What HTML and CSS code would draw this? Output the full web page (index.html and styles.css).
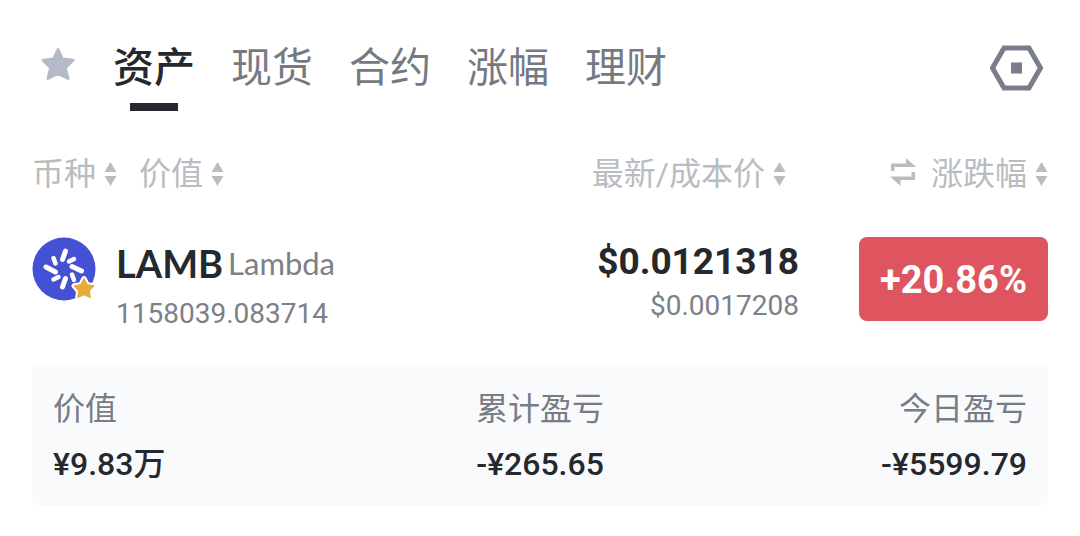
FILE: index.html
```html
<!DOCTYPE html>
<html lang="zh-CN">
<head>
<meta charset="utf-8">
<meta name="viewport" content="width=device-width, initial-scale=1">
<title>资产</title>
<link rel="stylesheet" href="styles.css">
</head>
<body>
<svg class="defs" aria-hidden="true">
  <symbol id="sort" viewBox="0 0 12 24"><path d="M6 0 12 10H0zM0 14h12L6 24z" fill="currentColor"/></symbol>
</svg>
<main class="page">
  <nav class="topbar">
    <button class="icon-button" aria-label="自选">
      <svg class="star" viewBox="0 0 36 36"><path d="M18 3.500 22.300 12.900 33 14.200 25.300 21.700 28 32.500 18 27.500 8 32.500 10.700 21.700 3 14.200 13.700 12.900Z" fill="currentColor" stroke="currentColor" stroke-width="3" stroke-linejoin="round"/></svg>
    </button>
    <div class="tabs">
      <button class="tab tab-active" aria-current="page">资产</button>
      <button class="tab">现货</button>
      <button class="tab">合约</button>
      <button class="tab">涨幅</button>
      <button class="tab">理财</button>
    </div>
    <button class="icon-button settings" aria-label="设置">
      <svg class="hexagon" viewBox="0 0 54 46"><path d="M14 3h25l11.500 20L39 43H14L2.500 23z" fill="none" stroke="currentColor" stroke-width="5"/><path d="M21 17.500h11v11H21z" fill="currentColor"/></svg>
    </button>
  </nav>

  <table class="assets">
    <thead>
      <tr>
        <th class="col-coin" scope="col">
          <div class="heads">
            <button class="sorter">币种<svg class="sort"><use href="#sort"/></svg></button>
            <button class="sorter">价值<svg class="sort"><use href="#sort"/></svg></button>
          </div>
        </th>
        <th class="col-price" scope="col">
          <div class="heads heads-price"><button class="sorter">最新/成本价<svg class="sort"><use href="#sort"/></svg></button></div>
        </th>
        <th class="col-change" scope="col">
          <div class="heads heads-change">
            <button class="icon-button swap-button" aria-label="切换"><svg class="swap" viewBox="0 0 26 28"><path d="M1 13V5.500h15V0l10 9H4.500v4zM25 14v8H10.500v6L0 18.500h21.500V14z" fill="currentColor"/></svg></button>
            <button class="sorter">涨跌幅<svg class="sort"><use href="#sort"/></svg></button>
          </div>
        </th>
      </tr>
    </thead>
    <tbody>
      <tr>
        <td>
          <div class="coin">
            <svg class="logo" viewBox="0 0 64 64" role="img" aria-label="Lambda">
              <circle cx="32" cy="32" r="31.500" fill="#4551d4"/>
              <g stroke="#fff" stroke-linecap="round" stroke-width="5" fill="none">
                <path d="M33.500 14 30.500 22.500M49.500 34 40 29.500M30.500 50 33.500 41.500M14 30 23.500 35"/>
                <path d="M21.500 21 23.500 26.500M42 22 37 24.500M42 43 40 37.500M21.500 42.500 26.500 40" stroke-width="4.500"/>
              </g>
              <path d="M52 41.500 55.300 47.600 62 48.800 57.400 54 58.300 60.600 52 57.800 45.700 60.600 46.600 54 42 48.800 48.700 47.600Z" fill="#e6ad3c" stroke="#fff" stroke-width="5" stroke-linejoin="round" paint-order="stroke"/>
              <path d="M52 41.500 55.300 47.600 62 48.800 57.400 54 58.300 60.600 52 57.800 45.700 60.600 46.600 54 42 48.800 48.700 47.600Z" fill="#e6ad3c" stroke="#e6ad3c" stroke-linejoin="round"/>
            </svg>
            <div>
              <div class="coin-title"><strong class="symbol">LAMB</strong><span class="coin-name">Lambda</span></div>
              <div class="sub">1158039.083714</div>
            </div>
          </div>
        </td>
        <td class="price-cell">
          <div class="price">$0.0121318</div>
          <div class="sub sub-price">$0.0017208</div>
        </td>
        <td><div class="change">+20.86%</div></td>
      </tr>
    </tbody>
  </table>

  <dl class="summary">
    <div class="stat"><dt>价值</dt><dd>¥9.83万</dd></div>
    <div class="stat stat-mid"><dt>累计盈亏</dt><dd>-¥265.65</dd></div>
    <div class="stat stat-end"><dt>今日盈亏</dt><dd>-¥5599.79</dd></div>
  </dl>
</main>
</body>
</html>
```
FILE: styles.css
```css
* { box-sizing: border-box; }
body {
  margin: 0;
  background: #fff;
  color: #25282d;
  font-family: Roboto, "Noto Sans CJK SC", sans-serif;
}
button {
  border: 0;
  padding: 0;
  background: none;
  color: inherit;
  font: inherit;
  cursor: pointer;
}
svg { display: block; flex: none; }
.defs { position: absolute; width: 0; height: 0; }
.page { padding: 38px 32px 30px; }

.topbar { display: flex; align-items: flex-start; padding: 0 4px 0 8px; }
.icon-button { color: #b4bac7; }
.star { width: 36px; height: 36px; margin-top: 8px; }
.tabs { display: flex; gap: 36px; margin-left: 37px; }
.tab {
  display: flex;
  flex-direction: column;
  align-items: center;
  height: 73px;
  color: #757a82;
  font-size: 41px;
  line-height: 60px;
}
.tab-active { color: #25282d; font-weight: 500; }
.tab-active::after { content: ""; width: 48px; height: 8px; margin-top: 5px; background: #25282d; }
.settings { margin: 7px 0 0 auto; color: #797d8c; }
.hexagon { width: 54px; height: 46px; }

.assets { width: 100%; margin-top: 39px; border-collapse: collapse; table-layout: fixed; }
.assets th, .assets td { padding: 0; vertical-align: top; text-align: left; font-weight: 400; }
.col-price { width: 300px; }
.col-change { width: 249px; }
.heads { display: flex; align-items: center; gap: 22px; height: 48px; color: #b9bcc0; }
.heads-price { justify-content: flex-end; padding-right: 13px; }
.heads-change { justify-content: flex-end; gap: 15px; }
.sorter { display: flex; align-items: center; gap: 8px; font-size: 32px; line-height: 48px; }
.sort { width: 13px; height: 24px; }
.swap-button { padding-bottom: 4px; color: inherit; }
.swap { width: 26px; height: 28px; }

.assets td { padding-top: 39px; }
.coin { display: flex; gap: 20px; }
.logo { width: 64px; height: 64px; }
.coin-title { display: flex; align-items: center; gap: 5px; font-family: Lato, sans-serif; line-height: 52px; }
.symbol { font-size: 38px; font-weight: 700; }
.coin-name { color: #7c8087; font-size: 31px; }
.sub { color: #7c8087; font-size: 28px; line-height: 50px; }
.assets .price-cell { text-align: right; }
.price { font-size: 37px; font-weight: 700; line-height: 50px; }
.sub-price { line-height: 38px; }
.change {
  height: 84px;
  margin-left: 60px;
  border-radius: 8px;
  background: #de5560;
  color: #fff;
  font-size: 38px;
  font-weight: 700;
  line-height: 86px;
  text-align: center;
}

.summary {
  display: grid;
  grid-template-columns: 1fr auto 1fr;
  margin: 26px 0 0;
  padding: 20px 21px 18px;
  border-radius: 8px;
  background: #f9fafc;
}
.stat dt { color: #787c84; font-size: 32px; line-height: 48px; }
.stat dd { margin: 0; padding-top: 7px; font-size: 32px; font-weight: 500; line-height: 48px; }
.stat-mid { text-align: center; }
.stat-end { text-align: right; }
```
